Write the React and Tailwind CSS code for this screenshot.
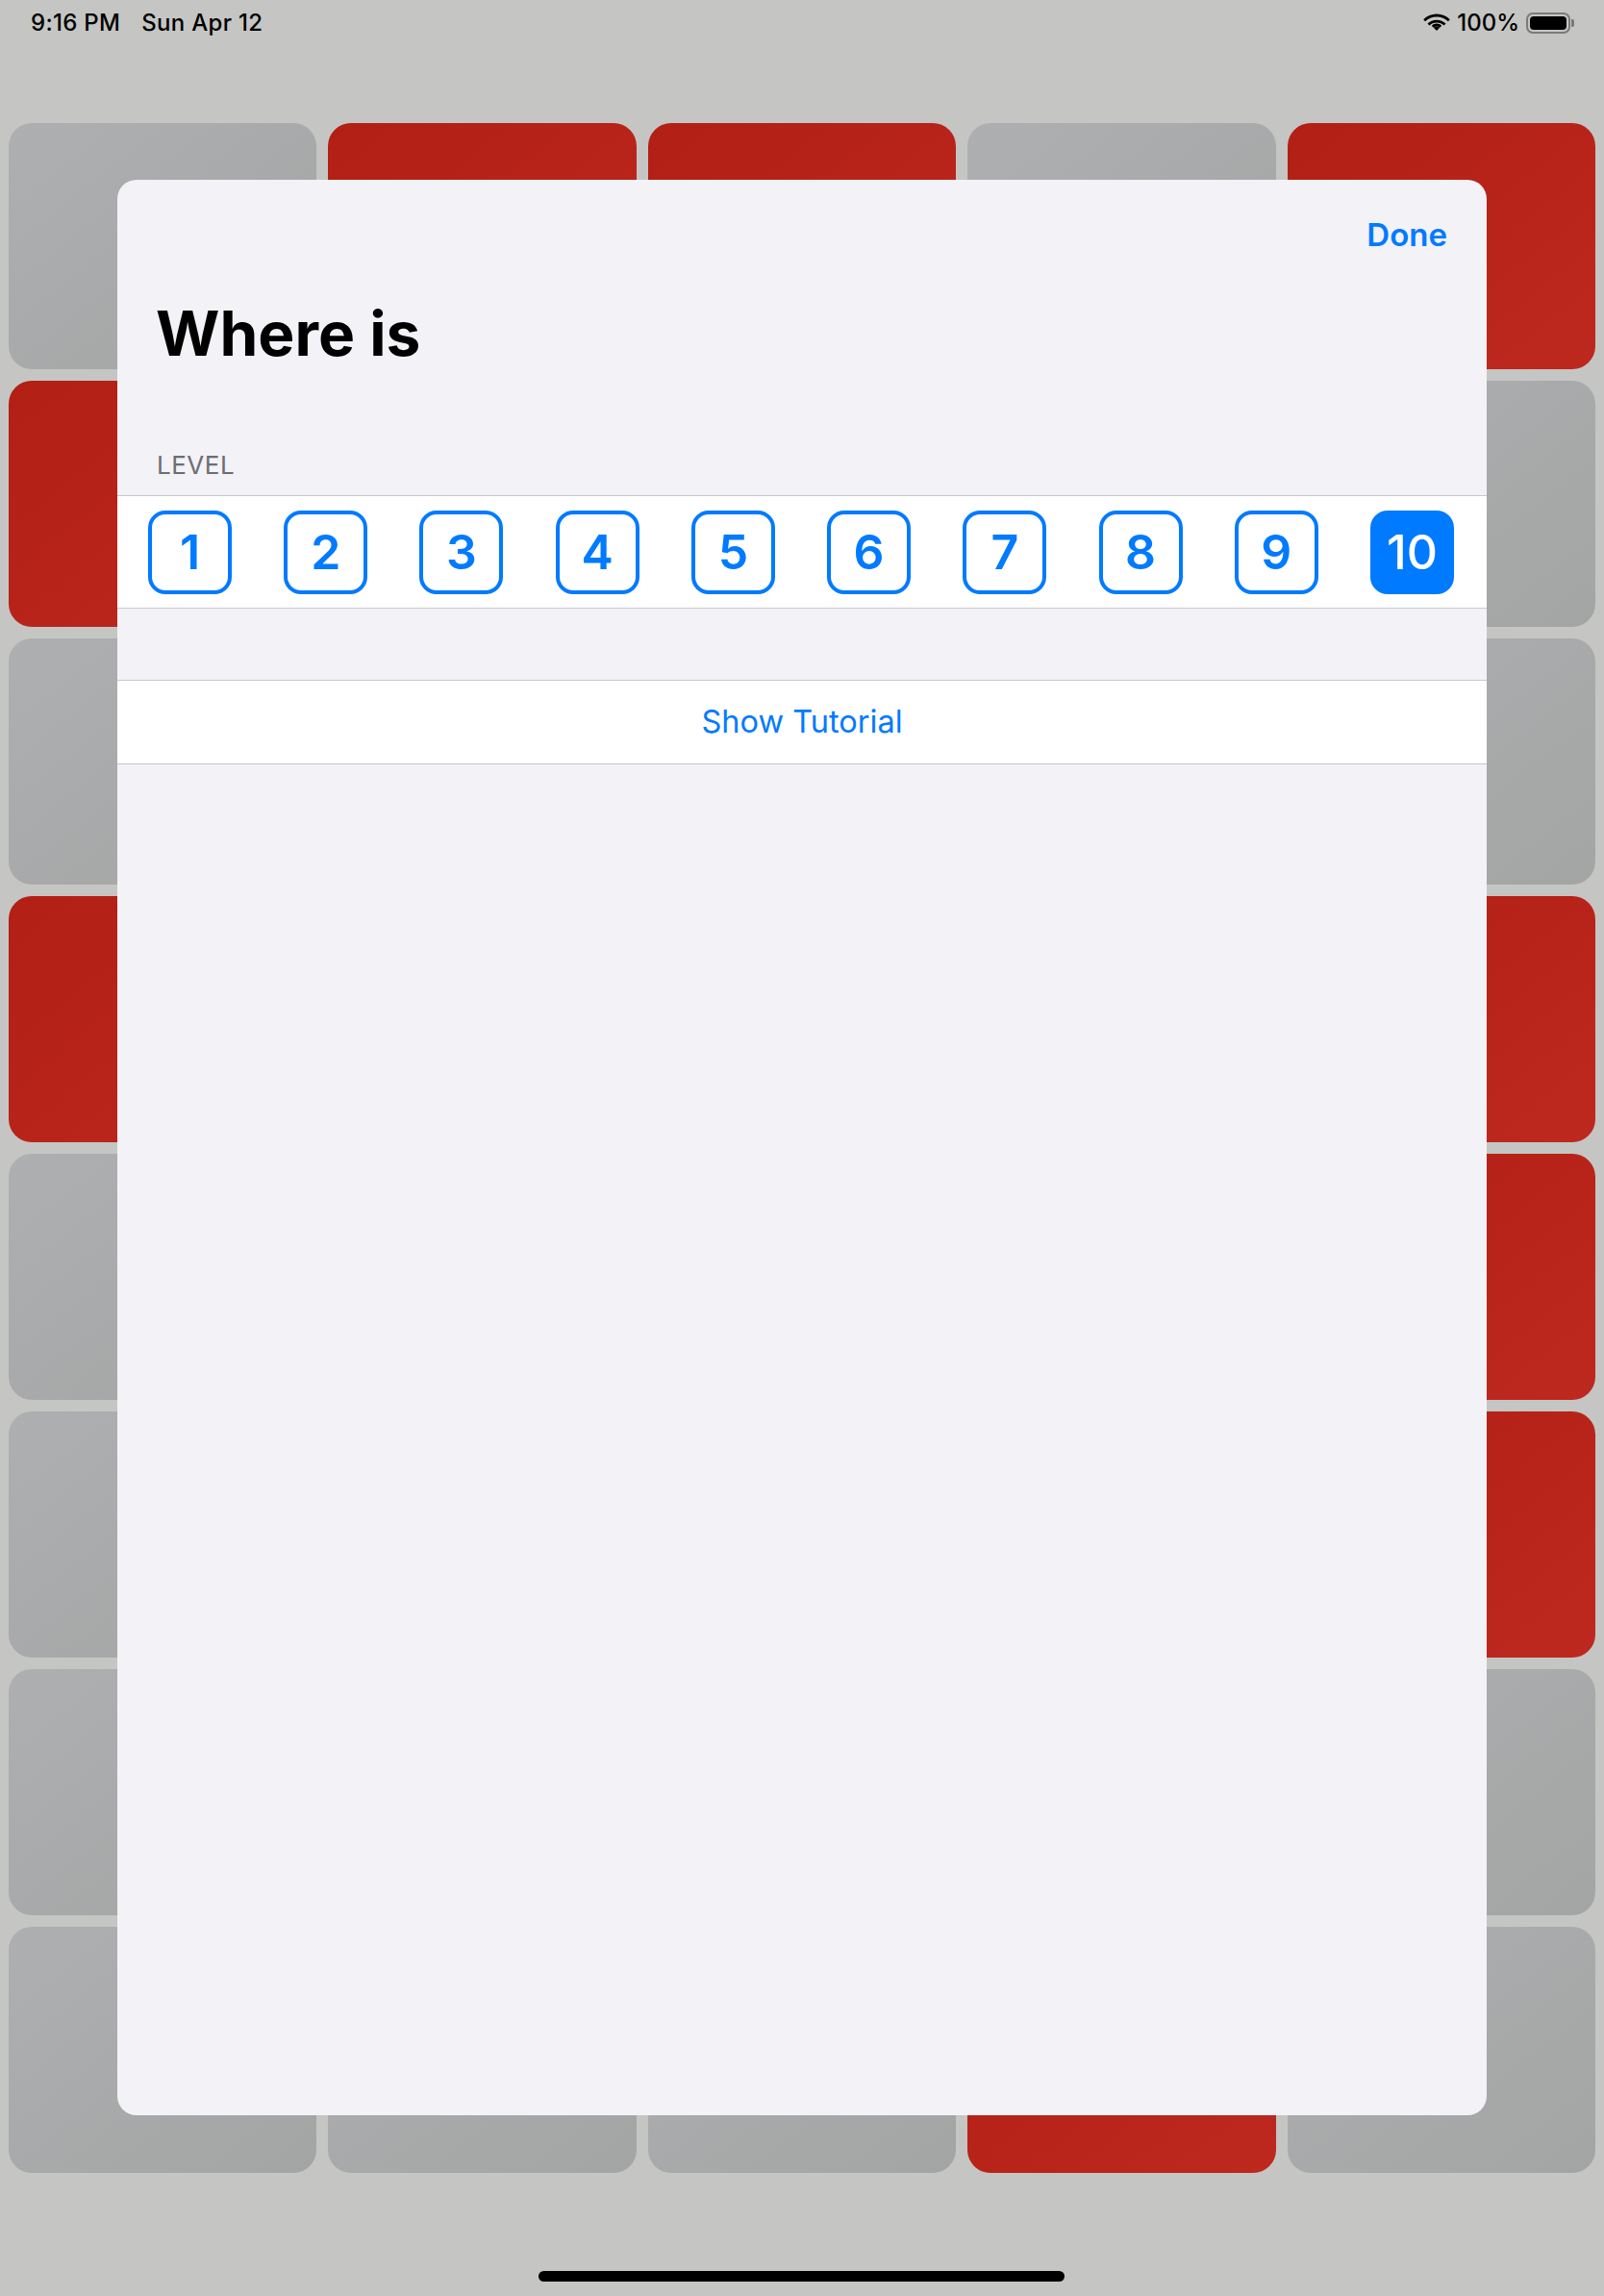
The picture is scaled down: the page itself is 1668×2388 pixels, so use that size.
import React from "react";

const pattern = [
  "GRRGR",
  "RGGGG",
  "GGGGG",
  "RGGGR",
  "GGGGR",
  "GGGGR",
  "GGGGG",
  "GGGRG",
];

function Wifi() {
  return (
    <svg width="28" height="20" viewBox="0 0 28 20" fill="#000">
      <path d="M14 2.2c4.6 0 8.8 1.8 11.9 4.8l1.9-2C24.2 1.5 19.3-.6 14-.6S3.8 1.5.2 5l1.9 2C5.2 4 9.4 2.2 14 2.2z" transform="translate(0 1.2)" />
      <path d="M14 8.4c2.9 0 5.6 1.1 7.6 3l1.9-2C21 7 17.6 5.6 14 5.6S7 7 4.5 9.4l1.9 2c2-1.9 4.7-3 7.6-3z" transform="translate(0 1.2)" />
      <path d="M14 14.4c1.2 0 2.3.5 3.1 1.2l-3.1 3.2-3.1-3.2c.8-.7 1.9-1.2 3.1-1.2z" transform="translate(0 -0.8)" />
      <path d="M14 11.2c2 0 3.8.8 5.2 2.1l-1.9 2c-.9-.8-2-1.3-3.3-1.3s-2.4.5-3.3 1.3l-1.9-2c1.4-1.3 3.2-2.1 5.2-2.1z" transform="translate(0 -0.6)" />
    </svg>
  );
}

function Battery() {
  return (
    <div className="flex items-center">
      <div className="w-[46px] h-[22px] rounded-[7px] border-[2px] border-[#7a7a7a] p-[2px]">
        <div className="w-full h-full rounded-[4px] bg-black" />
      </div>
      <div className="w-[3px] h-[8px] rounded-r-[2px] bg-[#7a7a7a] ml-[1px]" />
    </div>
  );
}

export default function App() {
  const levels = [1, 2, 3, 4, 5, 6, 7, 8, 9, 10];
  return (
    <div
      className="relative w-[1668px] h-[2388px] overflow-hidden bg-[#c5c6c3]"
      style={{ fontFamily: "Inter, 'Noto Sans', sans-serif" }}
    >
      {/* status bar */}
      <div className="h-[46px] pt-[2px] flex items-center justify-between pl-[32px] pr-[31px] text-[24px] font-medium text-black">
        <div className="flex items-center gap-[22px]">
          <span className="tracking-[0.3px]">9:16 PM</span>
          <span className="tracking-[0.3px]">Sun Apr 12</span>
        </div>
        <div className="flex items-center gap-[7px]">
          <Wifi />
          <span>100%</span>
          <Battery />
        </div>
      </div>

      {/* background tiles */}
      <div className="mt-[82px] px-[9px] grid grid-cols-5 gap-[12px]">
        {pattern.flatMap((row, r) =>
          row.split("").map((c, i) => (
            <div
              key={r + "-" + i}
              className={
                "h-[256px] rounded-[24px] " +
                (c === "R"
                  ? "bg-gradient-to-br from-[#b21f14] to-[#bd281f]"
                  : "bg-gradient-to-br from-[#aeafb0] to-[#a3a5a5]")
              }
            />
          ))
        )}
      </div>

      {/* modal sheet */}
      <div className="absolute left-[122px] top-[187px] w-[1424px] h-[2013px] rounded-[20px] bg-[#f2f2f7] overflow-hidden">
        <div className="flex justify-end pt-[37px] pr-[41px]">
          <span className="text-[33px] leading-[40px] font-semibold text-[#007aff]">Done</span>
        </div>
        <h1 className="mt-[43px] pl-[40px] text-[64px] leading-[80px] font-bold text-black">
          Where is
        </h1>
        <div className="mt-[81px] pl-[41px] text-[26px] leading-[32px] text-[#6d6d72] tracking-[0.5px]">
          LEVEL
        </div>
        <div className="mt-[15px] bg-white border-y border-[#c8c7cc] h-[118px] flex items-center justify-between pl-[32px] pr-[34px]">
          {levels.map((n) =>
            n === 10 ? (
              <div
                key={n}
                className="w-[87px] h-[87px] rounded-[18px] bg-[#007aff] flex items-center justify-center text-white text-[50px] font-medium"
              >
                {n}
              </div>
            ) : (
              <div
                key={n}
                className="w-[87px] h-[87px] rounded-[18px] border-[4px] border-[#007aff] flex items-center justify-center text-[#007aff] text-[50px] font-semibold"
              >
                {n}
              </div>
            )
          )}
        </div>
        <div className="mt-[74px] bg-white border-y border-[#c8c7cc] h-[88px] flex items-center justify-center">
          <span className="text-[32.5px] text-[#007aff]">Show Tutorial</span>
        </div>
      </div>

      {/* home indicator */}
      <div className="absolute left-[560px] top-[2362px] w-[547px] h-[11px] rounded-full bg-black" />
    </div>
  );
}
